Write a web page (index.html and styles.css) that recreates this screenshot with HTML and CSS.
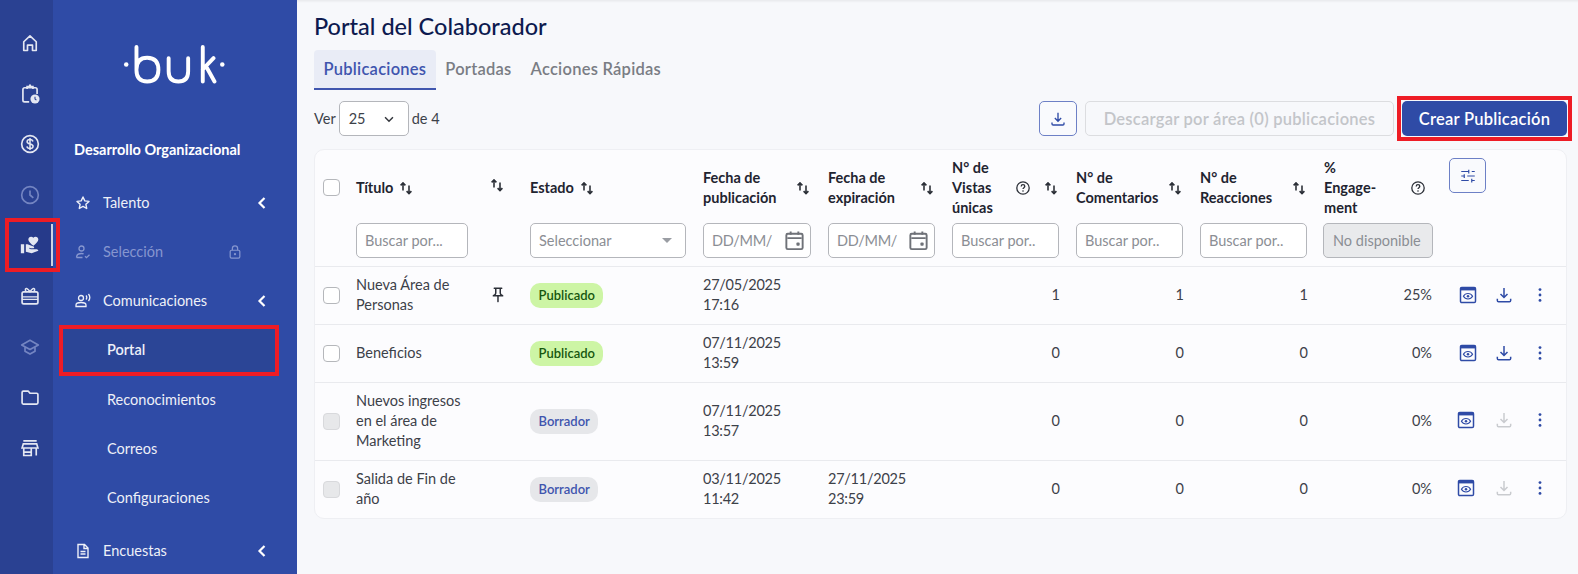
FILE: index.html
```html
<!DOCTYPE html>
<html lang="es">
<head>
    <meta charset="UTF-8">
    <title>Portal del Colaborador</title>
    <link rel="stylesheet" href="styles.css">
</head>
<body>
    <svg class="icon-defs" aria-hidden="true">
        <symbol id="i-sort" viewBox="0 0 16 16"><path d="M5 10.500V3M2.600 5.400 5 3l2.400 2.400M11 5.500V13.500M8.600 11.100 11 13.500l2.400-2.400" fill="none" stroke="currentColor" stroke-width="1.600"/></symbol>
        <symbol id="i-help" viewBox="0 0 16 16"><circle cx="8" cy="8" r="6.200" fill="none" stroke="currentColor" stroke-width="1.300"/><path d="M6.200 6.400c0-1 .800-1.700 1.800-1.700s1.800.700 1.800 1.600c0 1.300-1.800 1.400-1.800 2.800" fill="none" stroke="currentColor" stroke-width="1.300"/><circle cx="8" cy="11" r=".800" fill="currentColor"/></symbol>
        <symbol id="i-calendar" viewBox="0 0 24 24"><path d="M4.500 9.500h15M8 2.500V6M16 2.500V6" fill="none" stroke="currentColor" stroke-width="2"/><rect x="3.500" y="5" width="17" height="16" rx="1.500" fill="none" stroke="currentColor" stroke-width="2"/><rect x="14" y="14" width="3.400" height="3.400" rx="1" fill="currentColor"/></symbol>
        <symbol id="i-download" viewBox="0 0 24 24"><path d="M12 3.500v11M7.800 10.800 12 15l4.200-4.200M4 16.500v2A1.500 1.500 0 0 0 5.500 20h13a1.500 1.500 0 0 0 1.500-1.500v-2" fill="none" stroke="currentColor" stroke-width="1.800"/></symbol>
        <symbol id="i-preview" viewBox="0 0 24 24"><rect x="3" y="3" width="18" height="18" rx="1.500" fill="none" stroke="currentColor" stroke-width="1.800"/><path d="M3 3h18v3.500H3z" fill="currentColor"/><path d="M6.500 13.500c1.200-2.200 3.200-3.300 5.500-3.300s4.300 1.100 5.500 3.300c-1.200 2.200-3.200 3.300-5.500 3.300s-4.300-1.100-5.500-3.300z" fill="none" stroke="currentColor" stroke-width="1.400"/><circle cx="12" cy="13.500" r="1.500" fill="currentColor"/></symbol>
        <symbol id="i-dots" viewBox="0 0 24 24"><circle cx="12" cy="5.500" r="1.700" fill="currentColor"/><circle cx="12" cy="12" r="1.700" fill="currentColor"/><circle cx="12" cy="18.500" r="1.700" fill="currentColor"/></symbol>
        <symbol id="i-pin" viewBox="0 0 24 24"><path d="M14 4v5c0 1.120.370 2.160 1 3H9c.650-.860 1-1.900 1-3V4h4m3-2H7c-.550 0-1 .450-1 1s.450 1 1 1h1v5c0 1.660-1.340 3-3 3v2h5.970v7l1 1 1-1v-7H19v-2c-1.660 0-3-1.340-3-3V4h1c.550 0 1-.450 1-1s-.450-1-1-1z" fill="currentColor"/></symbol>
        <symbol id="i-chevron" viewBox="0 0 16 16"><path d="M10.500 3 5.500 8l5 5" fill="none" stroke="currentColor" stroke-width="2.200"/></symbol>
    </svg>

    <nav class="rail">
        <a class="rail-item"><svg class="rail-icon" viewBox="0 0 24 24"><path d="M4.500 10.500 12 3.500l7.500 7V21H15v-6.500H9V21H4.500z" fill="none" stroke="currentColor" stroke-width="2" stroke-linejoin="round"/></svg></a>
        <a class="rail-item"><svg class="rail-icon" viewBox="0 0 24 24"><path d="M11 21.500H5.500a2 2 0 0 1-2-2V6.500a2 2 0 0 1 2-2h13a2 2 0 0 1 2 2V12M8.500 6V3h2.500l1-1.500L13 3h2.500v3" fill="none" stroke="currentColor" stroke-width="2"/><circle cx="18" cy="18" r="5.500" fill="currentColor"/><path d="M18 15.200V18l1.700 1.300" fill="none" stroke="#2a4192" stroke-width="1.300"/></svg></a>
        <a class="rail-item"><svg class="rail-icon" viewBox="0 0 24 24"><circle cx="12" cy="12" r="10" fill="none" stroke="currentColor" stroke-width="2"/><path d="M15.500 9c-.300-1.500-1.700-2.300-3.500-2.300-2 0-3.500 1-3.500 2.600 0 3.600 7.200 1.800 7.200 5.400 0 1.700-1.600 2.700-3.700 2.700-1.900 0-3.400-.900-3.700-2.600M12 4.800v14.400" fill="none" stroke="currentColor" stroke-width="1.800"/></svg></a>
        <a class="rail-item is-disabled"><svg class="rail-icon" viewBox="0 0 24 24"><circle cx="12" cy="12" r="10" fill="none" stroke="currentColor" stroke-width="2"/><path d="M12 6.500V12l4 3.500" fill="none" stroke="currentColor" stroke-width="2"/></svg></a>
        <a class="rail-item is-active"><svg class="rail-icon" viewBox="0 0 24 24"><path d="M1 11h4v11H1zm15-7.750C16.650 2.490 17.660 2 18.700 2 20.550 2 22 3.450 22 5.300c0 2.270-2.910 4.900-6 7.700-3.090-2.810-6-5.440-6-7.700C10 3.450 11.450 2 13.300 2c1.040 0 2.050.490 2.700 1.250zM20 17h-7l-2.090-.730.330-.940L13 16h2.820c.650 0 1.180-.530 1.180-1.180 0-.490-.310-.930-.770-1.110L8.970 11H7v9.020L14 22l8.010-3c-.010-1.100-.900-2-2.010-2z" fill="currentColor"/></svg></a>
        <a class="rail-item"><svg class="rail-icon" viewBox="0 0 24 24"><rect x="2.500" y="7" width="19" height="14.500" rx="2" fill="none" stroke="currentColor" stroke-width="2"/><path d="M2.500 16h19M2.500 13h19M8 7c-2-1-2.200-3.700-.500-4 1.700-.300 3.500 2.500 4.500 4 1-1.500 2.800-4.300 4.500-4 1.700.300 1.500 3-.500 4" fill="none" stroke="currentColor" stroke-width="1.700"/></svg></a>
        <a class="rail-item is-disabled"><svg class="rail-icon" viewBox="0 0 24 24"><path d="M12 4 2 9.500 12 15l10-5.500zM6 12v5l6 3.500 6-3.500v-5" fill="none" stroke="currentColor" stroke-width="2" stroke-linejoin="round"/></svg></a>
        <a class="rail-item"><svg class="rail-icon" viewBox="0 0 24 24"><path d="M2.500 6.500A1.500 1.500 0 0 1 4 5h6l2 2.500h8A1.500 1.500 0 0 1 21.500 9v10a1.500 1.500 0 0 1-1.500 1.500H4A1.500 1.500 0 0 1 2.500 19z" fill="none" stroke="currentColor" stroke-width="2" stroke-linejoin="round"/></svg></a>
        <a class="rail-item"><svg class="rail-icon" viewBox="0 0 24 24"><path d="M4 3.500h16M2.500 12l1.500-5h16l1.500 5zM4.500 12v9h9v-9M19.500 12v9M4.500 17h9" fill="none" stroke="currentColor" stroke-width="2"/></svg></a>
    </nav>

    <aside class="sidebar">
        <div class="logo">
            <svg class="logo-mark" viewBox="0 0 104 40" role="img" aria-label="buk">
                <circle cx="2.500" cy="20" r="2.300" fill="#fff"/>
                <circle cx="101" cy="20" r="2.300" fill="#fff"/>
                <path d="M13 2v24C13 33.500 16.500 37.500 24 37.500S35.500 33.500 35.500 25.500 31.500 13 24 13 13 17 13 25M46 13.500V27c0 7 3 10.500 10 10.500s10-3.500 10-10.500V13.500M81 2v35.500M81 25 92 13.500M84.500 22 93 37.500" fill="none" stroke="#fff" stroke-width="4" stroke-linecap="round"/>
            </svg>
        </div>
        <p class="sidebar-title">Desarrollo Organizacional</p>
        <ul class="menu">
            <li class="menu-item">
                <svg class="menu-icon" viewBox="0 0 16 16"><path d="m8 2 1.800 3.900 4.200.500-3.100 2.900.800 4.200L8 11.400 4.300 13.500l.800-4.200L2 6.400l4.200-.500z" fill="none" stroke="currentColor" stroke-width="1.400" stroke-linejoin="round"/></svg>
                <span class="menu-label">Talento</span>
                <svg class="menu-chevron"><use href="#i-chevron"/></svg>
            </li>
            <li class="menu-item is-locked">
                <svg class="menu-icon" viewBox="0 0 16 16"><circle cx="6.500" cy="4.500" r="2.500" fill="none" stroke="currentColor" stroke-width="1.300"/><path d="M1.500 13.500c0-2.500 2.200-4 5-4 .800 0 1.500.100 2.100.400M1.500 13.500h6M10 12.200l1.500 1.500 3-3" fill="none" stroke="currentColor" stroke-width="1.300"/></svg>
                <span class="menu-label">Selección</span>
                <svg class="menu-lock" viewBox="0 0 16 16"><rect x="2.500" y="6" width="11" height="9" rx="1.500" fill="none" stroke="currentColor" stroke-width="1.400"/><path d="M5 6V4a3 3 0 0 1 6 0v2" fill="none" stroke="currentColor" stroke-width="1.400"/><circle cx="8" cy="10.500" r="1.300" fill="currentColor"/></svg>
            </li>
            <li class="menu-item">
                <svg class="menu-icon" viewBox="0 0 16 16"><circle cx="6" cy="5" r="2.500" fill="none" stroke="currentColor" stroke-width="1.300"/><path d="M1 13.500V12c0-1.500 2.200-2.500 5-2.500s5 1 5 2.500v1.500zM11 2.500c.800 1 .800 3 0 4M13.500 1c1.500 2 1.500 5 0 7" fill="none" stroke="currentColor" stroke-width="1.300"/></svg>
                <span class="menu-label">Comunicaciones</span>
                <svg class="menu-chevron"><use href="#i-chevron"/></svg>
            </li>
            <li class="submenu-item is-active">Portal</li>
            <li class="submenu-item">Reconocimientos</li>
            <li class="submenu-item">Correos</li>
            <li class="submenu-item">Configuraciones</li>
            <li class="menu-item menu-item-last">
                <svg class="menu-icon" viewBox="0 0 16 16"><path d="M3 1.500h6.500L13 5v9.500H3zM9 2v3.500h4M5.500 8.500h5M5.500 11h5" fill="none" stroke="currentColor" stroke-width="1.400"/></svg>
                <span class="menu-label">Encuestas</span>
                <svg class="menu-chevron"><use href="#i-chevron"/></svg>
            </li>
        </ul>
    </aside>

    <main class="main">
        <h1 class="page-title">Portal del Colaborador</h1>
        <div class="tabs">
            <a class="tab is-active">Publicaciones</a>
            <a class="tab">Portadas</a>
            <a class="tab">Acciones Rápidas</a>
        </div>

        <div class="toolbar">
            <div class="page-size">
                <span>Ver</span>
                <div class="select-small">
                    <span>25</span>
                    <svg class="select-caret" viewBox="0 0 16 16"><path d="m3.500 6 4.500 4.500L12.500 6" fill="none" stroke="currentColor" stroke-width="1.700"/></svg>
                </div>
                <span>de 4</span>
            </div>
            <div class="toolbar-actions">
                <button class="btn btn-icon"><svg class="btn-svg"><use href="#i-download"/></svg></button>
                <button class="btn btn-disabled">Descargar por área (0) publicaciones</button>
                <button class="btn btn-primary">Crear Publicación</button>
            </div>
        </div>

        <div class="card">
            <table class="grid">
                <colgroup>
                    <col class="col-check"><col class="col-title"><col class="col-pin"><col class="col-state">
                    <col class="col-date"><col class="col-std"><col class="col-std"><col class="col-std"><col class="col-std">
                    <col class="col-eng"><col>
                </colgroup>
                <thead>
                    <tr class="head-row">
                        <th class="cell-check"><span class="check"></span></th>
                        <th><div class="th-title">Título <svg class="sort"><use href="#i-sort"/></svg></div></th>
                        <th class="cell-pin"><svg class="sort"><use href="#i-sort"/></svg></th>
                        <th><div class="th-title">Estado <svg class="sort"><use href="#i-sort"/></svg></div></th>
                        <th><div class="th-wrap"><span>Fecha de publicación</span><svg class="sort"><use href="#i-sort"/></svg></div></th>
                        <th><div class="th-wrap"><span>Fecha de expiración</span><svg class="sort"><use href="#i-sort"/></svg></div></th>
                        <th><div class="th-wrap"><span class="th-narrow">N° de Vistas únicas</span><svg class="help"><use href="#i-help"/></svg><svg class="sort"><use href="#i-sort"/></svg></div></th>
                        <th><div class="th-wrap"><span>N° de Comentarios</span><svg class="sort"><use href="#i-sort"/></svg></div></th>
                        <th><div class="th-wrap"><span>N° de Reacciones</span><svg class="sort"><use href="#i-sort"/></svg></div></th>
                        <th><div class="th-wrap"><span class="th-narrow">% Engage-<br>ment</span><svg class="help"><use href="#i-help"/></svg></div></th>
                        <th class="cell-tune"><button class="btn btn-icon btn-tune"><svg class="btn-svg" viewBox="0 0 24 24"><path d="M3 6h10M17 6h4M13 3.500v5M3 12h4M11 12h10M7 9.500v5M3 18h10M17 18h4M17 15.500v5" fill="none" stroke="currentColor" stroke-width="1.600"/></svg></button></th>
                    </tr>
                    <tr class="filter-row">
                        <th></th>
                        <th><div class="field">Buscar por...</div></th>
                        <th></th>
                        <th><div class="field field-select">Seleccionar<span class="caret"></span></div></th>
                        <th><div class="field field-date"><span class="date-text">DD/MM/</span><svg class="calendar"><use href="#i-calendar"/></svg></div></th>
                        <th><div class="field field-date"><span class="date-text">DD/MM/</span><svg class="calendar"><use href="#i-calendar"/></svg></div></th>
                        <th><div class="field">Buscar por..</div></th>
                        <th><div class="field">Buscar por..</div></th>
                        <th><div class="field">Buscar por..</div></th>
                        <th><div class="field field-off">No disponible</div></th>
                        <th></th>
                    </tr>
                </thead>
                <tbody>
                    <tr class="row">
                        <td class="cell-check"><span class="check"></span></td>
                        <td>Nueva Área de Personas</td>
                        <td class="cell-pin"><svg class="pin"><use href="#i-pin"/></svg></td>
                        <td class="cell-badge"><span class="badge badge-ok">Publicado</span></td>
                        <td class="date">27/05/2025<br>17:16</td>
                        <td class="date"></td>
                        <td class="num">1</td>
                        <td class="num">1</td>
                        <td class="num">1</td>
                        <td class="num pct">25%</td>
                        <td><div class="actions"><svg class="act"><use href="#i-preview"/></svg><svg class="act"><use href="#i-download"/></svg><svg class="act"><use href="#i-dots"/></svg></div></td>
                    </tr>
                    <tr class="row">
                        <td class="cell-check"><span class="check"></span></td>
                        <td>Beneficios</td>
                        <td class="cell-pin"></td>
                        <td class="cell-badge"><span class="badge badge-ok">Publicado</span></td>
                        <td class="date">07/11/2025<br>13:59</td>
                        <td class="date"></td>
                        <td class="num">0</td>
                        <td class="num">0</td>
                        <td class="num">0</td>
                        <td class="num pct">0%</td>
                        <td><div class="actions"><svg class="act"><use href="#i-preview"/></svg><svg class="act"><use href="#i-download"/></svg><svg class="act"><use href="#i-dots"/></svg></div></td>
                    </tr>
                    <tr class="row row-tall">
                        <td class="cell-check"><span class="check check-off"></span></td>
                        <td>Nuevos ingresos en el área de Marketing</td>
                        <td class="cell-pin"></td>
                        <td class="cell-badge"><span class="badge badge-draft">Borrador</span></td>
                        <td class="date">07/11/2025<br>13:57</td>
                        <td class="date"></td>
                        <td class="num">0</td>
                        <td class="num">0</td>
                        <td class="num">0</td>
                        <td class="num pct">0%</td>
                        <td><div class="actions is-draft"><svg class="act"><use href="#i-preview"/></svg><svg class="act act-off"><use href="#i-download"/></svg><svg class="act"><use href="#i-dots"/></svg></div></td>
                    </tr>
                    <tr class="row">
                        <td class="cell-check"><span class="check check-off"></span></td>
                        <td>Salida de Fin de año</td>
                        <td class="cell-pin"></td>
                        <td class="cell-badge"><span class="badge badge-draft">Borrador</span></td>
                        <td class="date">03/11/2025<br>11:42</td>
                        <td class="date">27/11/2025<br>23:59</td>
                        <td class="num">0</td>
                        <td class="num">0</td>
                        <td class="num">0</td>
                        <td class="num pct">0%</td>
                        <td><div class="actions is-draft"><svg class="act"><use href="#i-preview"/></svg><svg class="act act-off"><use href="#i-download"/></svg><svg class="act"><use href="#i-dots"/></svg></div></td>
                    </tr>
                </tbody>
            </table>
        </div>
    </main>
</body>
</html>
```

FILE: styles.css
```css
:root {
    --primary: #2f4ba6;
    --rail: #2a4192;
    --rail-active: #263a8a;
    --page: #f7f8fb;
    --card: #fcfcfe;
    --line: #e9eaee;
    --text: #3c4149;
    --head: #1f2430;
    --field: #b4b6bb;
    --mark: #ee1c25;
}

* {
    margin: 0;
    padding: 0;
    box-sizing: border-box;
}

html, body {
    height: 100%;
    overflow: hidden;
}

body {
    display: flex;
    font-family: "Lato", "Noto Sans", sans-serif;
    font-size: 14.5px;
    line-height: 20px;
    color: var(--text);
    background: var(--page);
}

.icon-defs {
    width: 0;
    height: 0;
    position: absolute;
}

/* rail */
.rail {
    width: 53px;
    flex: none;
    padding-top: 20px;
    background: var(--rail);
    display: flex;
    flex-direction: column;
    gap: 4.6px;
    position: relative;
    z-index: 2;
}

.rail-item {
    width: 44px;
    height: 46px;
    margin-left: 9px;
    display: flex;
    align-items: center;
    padding-left: 11px;
    color: #e4e7f2;
    position: relative;
    flex: none;
}

.rail-item.is-disabled {
    color: #7485c2;
}

.rail-item.is-active {
    width: 47px;
    background: linear-gradient(90deg, var(--rail-active) 44px, var(--primary) 44px);
    outline: 4px solid var(--mark);
}

.rail-item.is-active::after {
    content: "";
    position: absolute;
    left: 41.5px;
    top: 2px;
    width: 2.5px;
    height: 42px;
    background: #cfd3e2;
}

.rail-icon {
    width: 20px;
    height: 20px;
}

/* sidebar */
.sidebar {
    width: 244px;
    flex: none;
    background: var(--primary);
    color: #eef0f8;
    padding: 45px 0 0 21px;
    overflow: hidden;
}

.logo {
    padding-left: 49px;
    height: 38px;
}

.logo-mark {
    width: 103px;
    height: 39px;
    display: block;
}

.sidebar-title {
    margin-top: 57px;
    font-weight: 700;
    color: #fff;
}

.menu {
    list-style: none;
    margin-top: 21px;
}

.menu-item {
    display: flex;
    align-items: center;
    height: 43px;
    margin-bottom: 6.3px;
}

.menu-item-last {
    margin-top: 10px;
}

.menu-item.is-locked {
    color: #8696cf;
}

.menu-icon {
    width: 16px;
    height: 16px;
    margin-right: 12px;
    margin-left: 1px;
    flex: none;
}

.menu-label {
    flex: 1;
}

.menu-chevron {
    width: 16px;
    height: 16px;
    margin-right: 27px;
    color: #fff;
}

.menu-lock {
    width: 14px;
    height: 14px;
    margin-right: 55px;
}

.submenu-item {
    height: 43px;
    margin-bottom: 6.3px;
    margin-left: -11px;
    margin-right: 22px;
    padding-left: 44px;
    display: flex;
    align-items: center;
}

.submenu-item.is-active {
    background: #2b4596;
    font-weight: 600;
    outline: 4px solid var(--mark);
}

/* main */
.main {
    flex: 1;
    min-width: 0;
    padding: 0 11px 0 17px;
    box-shadow: inset 0 4px 3px -3px rgba(0, 0, 0, 0.08);
}

.page-title {
    font-size: 23.5px;
    line-height: 32px;
    font-weight: 500;
    color: #0d1a4f;
    padding-top: 10px;
}

.tabs {
    display: flex;
    margin-top: 8px;
    height: 40px;
}

.tab {
    display: flex;
    align-items: center;
    padding: 0 9.5px 2px;
    font-size: 16.5px;
    letter-spacing: 0.25px;
    font-weight: 600;
    color: #7a7d84;
}

.tab.is-active {
    color: #3f55ae;
    background: #e9ecf6;
    padding-bottom: 0;
    border-bottom: 2px solid #3f55ae;
    border-radius: 4px 4px 0 0;
}

.toolbar {
    display: flex;
    justify-content: space-between;
    align-items: center;
    margin-top: 11px;
}

.page-size {
    display: flex;
    align-items: center;
    gap: 3px;
}

.select-small {
    width: 70px;
    height: 35px;
    border: 1px solid var(--field);
    border-radius: 5px;
    background: #fff;
    padding: 0 9px;
    display: flex;
    align-items: center;
    justify-content: space-between;
}

.select-caret {
    width: 14px;
    height: 14px;
    color: #33363c;
    margin-right: 3px;
}

.toolbar-actions {
    display: flex;
    gap: 8px;
}

.btn {
    height: 35px;
    border-radius: 5px;
    font-family: inherit;
    font-size: 16.5px;
    letter-spacing: 0.25px;
    font-weight: 600;
    display: flex;
    align-items: center;
    justify-content: center;
    background: transparent;
}

.btn-icon {
    width: 38px;
    color: var(--primary);
    border: 1px solid #6d80c6;
    background: #f9fafd;
}

.btn-tune {
    width: 37px;
}

.btn-svg {
    width: 18px;
    height: 18px;
}

.btn-disabled {
    width: 309px;
    border: 1px solid #dcdde0;
    color: #c3c5c9;
}

.btn-primary {
    width: 165px;
    border: none;
    background: var(--primary);
    color: #fff;
    position: relative;
}

/* red frame round the button, square like the other two */
.btn-primary::after {
    content: "";
    position: absolute;
    inset: -5px;
    border: 4px solid var(--mark);
}

/* table */
.card {
    margin-top: 13px;
    border: 1px solid #eeeff3;
    border-radius: 10px;
    background: var(--card);
    overflow: hidden;
}

.grid {
    width: 100%;
    table-layout: fixed;
    border-collapse: separate;
    border-spacing: 0;
}

.col-check { width: 41px; }
.col-title { width: 129px; }
.col-pin { width: 45px; }
.col-state { width: 173px; }
.col-date { width: 125px; }
.col-std { width: 124px; }
.col-eng { width: 125px; }

th, td {
    padding: 0 17px 0 0;
    text-align: left;
    vertical-align: middle;
    font-weight: 400;
}

th {
    font-weight: 700;
    color: var(--head);
}

.head-row th {
    height: 73px;
    padding-top: 2px;
}

.filter-row th {
    height: 44px;
    vertical-align: top;
    border-bottom: 1px solid var(--line);
}

.row td {
    height: 58px;
    padding-bottom: 2px;
    border-bottom: 1px solid var(--line);
}

.row td.cell-check,
.row td.cell-badge {
    padding-bottom: 0;
}

.row-tall td {
    height: 78px;
}

.row:last-child td {
    border-bottom: none;
    height: 57px;
}

.cell-check {
    padding: 0 0 0 8px;
}

.cell-pin {
    padding: 0 0 0 4px;
}

.head-row th.cell-tune {
    vertical-align: top;
    padding: 8px 0 0 0;
}

.check {
    display: block;
    width: 17px;
    height: 17px;
    border: 1px solid #b5b7bb;
    border-radius: 4px;
    background: #fff;
}

.check-off {
    background: #e7e8ea;
    border-color: #d8d9dc;
}

.th-title {
    display: flex;
    align-items: center;
    gap: 5px;
}

.th-wrap {
    display: flex;
    align-items: center;
    justify-content: space-between;
}

.th-wrap span {
    width: 85px;
}

.th-wrap span.th-narrow {
    flex: none;
    width: 60px;
}

.sort {
    width: 16px;
    height: 16px;
    flex: none;
    color: #2c3038;
}

.help {
    width: 16px;
    height: 16px;
    flex: none;
    color: #2c3038;
    margin-left: auto;
    margin-right: 12px;
}

.th-narrow + .help:last-child {
    margin-right: 6px;
}

.field {
    height: 35px;
    border: 1px solid var(--field);
    border-radius: 5px;
    background: #fff;
    padding: 0 8px;
    display: flex;
    align-items: center;
    font-weight: 400;
    color: #8b8e94;
    white-space: nowrap;
    overflow: hidden;
}

.field-select {
    justify-content: space-between;
}

.caret {
    border-left: 5px solid transparent;
    border-right: 5px solid transparent;
    border-top: 5px solid #9a9da3;
    margin-right: 5px;
}

.field-date {
    justify-content: space-between;
    padding-right: 4px;
}

.date-text {
    letter-spacing: -0.3px;
}

.calendar {
    width: 23px;
    height: 23px;
    color: #6f7278;
    flex: none;
}

.field-off {
    background: #e9eaec;
    padding: 0 0 0 9px;
    margin-right: -1px;
    margin-left: -1px;
}

.pin {
    width: 18px;
    height: 18px;
    color: #2c3038;
    display: block;
}

.badge {
    display: inline-block;
    height: 25px;
    line-height: 24px;
    padding: 0 8.5px;
    border-radius: 10px;
    font-size: 13px;
    font-weight: 600;
}

.badge-ok {
    background: #cdf5a5;
    color: #17570f;
}

.badge-draft {
    background: #e6e7ea;
    color: #3f55ae;
}

.date {
    letter-spacing: -0.25px;
}

.num {
    text-align: right;
}

td.num {
    padding-right: 16px;
}

td.pct {
    padding-right: 17px;
}

.actions {
    display: flex;
    align-items: center;
    padding-left: 9px;
    gap: 16px;
}

.actions.is-draft {
    margin-bottom: 2px;
}

.actions.is-draft .act:first-child {
    margin-left: -2px;
    margin-right: 2px;
}

.act {
    width: 20px;
    height: 20px;
    flex: none;
    color: var(--primary);
}

.act-off {
    color: #c9cbcf;
}
```
